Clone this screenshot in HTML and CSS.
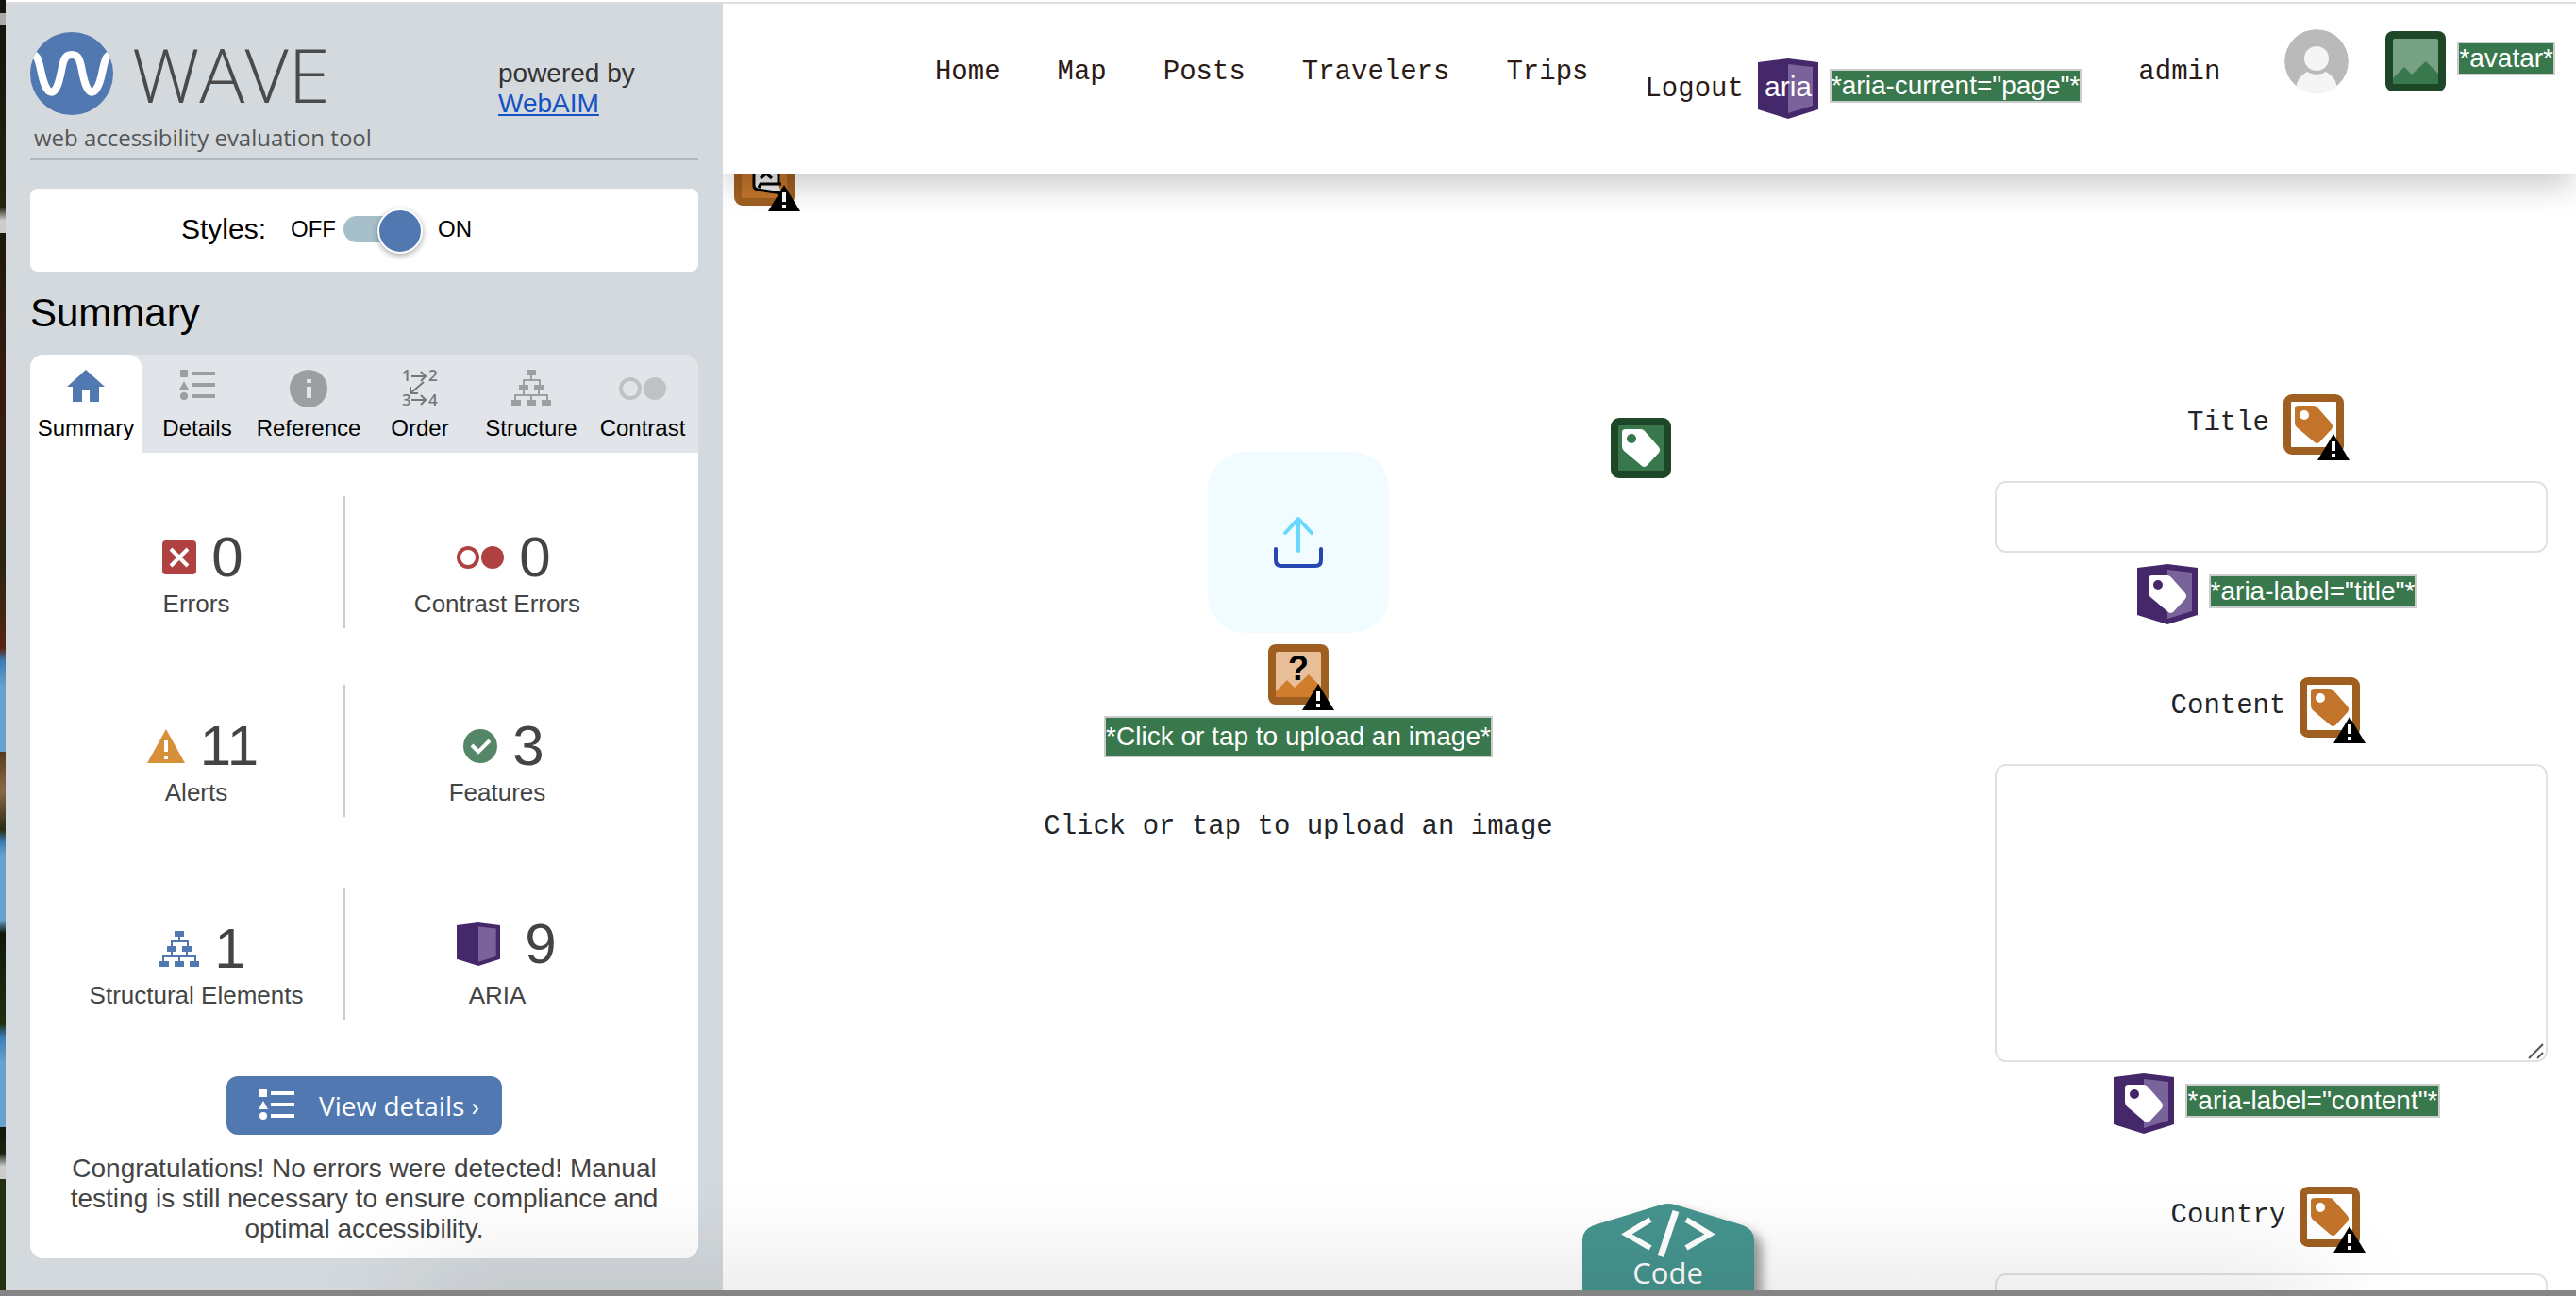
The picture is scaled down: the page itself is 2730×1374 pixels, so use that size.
FILE: index.html
```html
<!DOCTYPE html>
<html lang="en">
<head>
<meta charset="utf-8">
<title>WAVE evaluation</title>
<link rel="stylesheet" href="styles.css">
</head>
<body>
<svg class="defs" width="0" height="0" aria-hidden="true">
  <symbol id="tag" viewBox="0 0 64 64"><path fill-rule="evenodd" d="M12 15q0-3 4-3h16q2 0 4 2l15 17q2 3 0 6L38 51q-3 2-5 0L14 35q-2-2-2-5zM22 17a5 5 0 1 0 0 10a5 5 0 1 0 0-10z"/></symbol>
  <symbol id="alert" viewBox="0 0 34 28"><path d="M17 0L34 28H0z" fill="#000"/><path d="M15 8h4v10h-4zM15 21h4v4h-4z" fill="#fff"/></symbol>
  <symbol id="aria" viewBox="0 0 64 64"><path d="M0 4L32 0L64 4V54L32 64L0 54z" fill="#44286a"/><path d="M32 6L58 9V50L32 58z" fill="#7a629a"/></symbol>
  <symbol id="label-alert" viewBox="0 0 72 72"><rect x="4" y="4" width="56" height="56" rx="5" fill="#fff" stroke="#9f5f20" stroke-width="8"/><use href="#tag" width="64" height="64" fill="#c3742b"/><use href="#alert" x="36" y="42" width="34" height="28"/></symbol>
  <symbol id="tree" viewBox="0 0 42 38"><path d="M16 0h10v6h-4v4h9v6h3v6h-4v4h9v6h3v6H32v-6h5v-4H22v4h4v6H16v-6h4v-4H5v4h5v6H0v-6h3v-6h9v-4H8v-6h4v-6h8V6h-4zM14 12v4h4v6h-4v4h14v-4h-4v-6h5v-4z" fill-rule="evenodd"/></symbol>
  <symbol id="list" viewBox="0 0 38 34"><path d="M1 0h8v8H1zM5 12l5 9H0z"/><circle cx="5" cy="28" r="4"/><path d="M13 2h25v4H13zM13 14h25v4H13zM13 26h25v4H13z"/></symbol>
</svg>
<div class="app">
  <div class="desktop"></div>
  <aside class="sidebar">
    <header class="brand">
      <div>
        <div class="brand-name">
          <svg width="88" height="88" viewBox="0 0 88 88"><defs><clipPath id="disc"><circle cx="44" cy="44" r="44"/></clipPath></defs><circle cx="44" cy="44" r="44" fill="#5178b1"/><path clip-path="url(#disc)" d="M-2 26C8 20 9 31 12 44C17 68 26 70 31 50C35 35 34 24 44 24C54 24 53 35 57 50C62 70 71 68 76 44C79 31 80 20 90 26" fill="none" stroke="#fff" stroke-width="8"/></svg>
          <span>WAVE</span>
        </div>
        <p class="tagline">web accessibility evaluation tool</p>
      </div>
      <p class="powered">powered by<br><a href="#webaim">WebAIM</a></p>
    </header>
    <div class="styles-card">
      <span class="styles-title">Styles:</span>
      <label class="toggle">OFF <input type="checkbox" role="switch" checked> ON</label>
    </div>
    <h1>Summary</h1>
    <nav class="tabs">
      <button class="tab active" type="button"><svg width="40" height="40" viewBox="0 0 40 40"><path d="M20 0L40 18H34V34H24V22H16V34H6V18H0z" fill="#5178b1"/></svg>Summary</button>
      <button class="tab" type="button"><svg width="38" height="40" viewBox="0 0 38 40"><use href="#list" width="38" height="34" fill="#9d9ea1"/></svg>Details</button>
      <button class="tab" type="button"><svg width="40" height="40" viewBox="0 0 40 40"><circle cx="20" cy="20" r="20" fill="#9d9ea1"/><path d="M18 10h5v4h-5zM18 18h5v12h-5z" fill="#e1e4e9"/></svg>Reference</button>
      <button class="tab" type="button"><svg class="order" width="38" height="40" viewBox="0 0 38 40"><text x="0" y="12">1</text><text x="28" y="12">2</text><text x="0" y="38">3</text><text x="28" y="38">4</text><path d="M10 7H25M20 2l5 5l-5 5M10 32H25M20 27l5 5l-5 5M23 13L9 25M9 18v7h8"/></svg>Order</button>
      <button class="tab" type="button"><svg width="42" height="40" viewBox="0 0 42 40"><use href="#tree" width="42" height="38" fill="#9d9ea1"/></svg>Structure</button>
      <button class="tab" type="button"><svg width="50" height="40" viewBox="0 0 50 40"><circle cx="12" cy="20" r="10" fill="none" stroke="#c0c1c4" stroke-width="4"/><circle cx="38" cy="20" r="12" fill="#c0c1c4"/></svg>Contrast</button>
    </nav>
    <section class="panel">
      <div class="counts">
        <div class="count"><div class="num"><svg width="36" height="36" viewBox="0 0 36 36"><rect width="36" height="36" rx="4" fill="#af4140"/><path d="M9 9L27 27M27 9L9 27" stroke="#fff" stroke-width="4"/></svg>0</div>Errors</div>
        <div class="count"><div class="num"><svg width="50" height="36" viewBox="0 0 50 36"><circle cx="12" cy="18" r="10" fill="none" stroke="#af4140" stroke-width="4"/><circle cx="38" cy="18" r="12" fill="#af4140"/></svg>0</div>Contrast Errors</div>
        <div class="count"><div class="num"><svg width="40" height="36" viewBox="0 0 40 36"><path d="M20 0L40 36H0z" fill="#d89038"/><path d="M18 12h4v12h-4zM18 28h4v4h-4z" fill="#fff"/></svg>11</div>Alerts</div>
        <div class="count"><div class="num"><svg width="36" height="36" viewBox="0 0 36 36"><circle cx="18" cy="18" r="18" fill="#568668"/><path d="M9 17L16 24L28 12" fill="none" stroke="#fff" stroke-width="4"/></svg>3</div>Features</div>
        <div class="count"><div class="num"><svg width="42" height="38"><use href="#tree" width="42" height="38" fill="#5178b1"/></svg>1</div>Structural Elements</div>
        <div class="count"><div class="num aria-num"><svg width="46" height="46"><use href="#aria" width="46" height="46"/></svg>9</div>ARIA</div>
      </div>
      <button class="details" type="button"><svg width="38" height="34"><use href="#list" width="38" height="34" fill="#fff"/></svg>View details ›</button>
      <p class="congrats">Congratulations! No errors were detected! Manual testing is still necessary to ensure compliance and optimal accessibility.</p>
    </section>
  </aside>

  <main class="page">
    <header class="topbar">
      <nav class="links">
        <a href="#home">Home</a><a href="#map">Map</a><a href="#posts">Posts</a><a href="#travelers">Travelers</a><a href="#trips">Trips</a>
        <span class="logout"><a href="#logout" aria-current="page">Logout</a><svg width="64" height="64" viewBox="0 0 64 64"><use href="#aria" width="64" height="64"/><text x="32" y="40" class="aria-word">aria</text></svg><span class="note">*aria-current="page"*</span></span>
        <a href="#admin">admin</a>
      </nav>
      <div class="user">
        <svg width="68" height="68" viewBox="0 0 68 68"><defs><clipPath id="head"><circle cx="34" cy="34" r="34"/></clipPath></defs><g clip-path="url(#head)"><circle cx="34" cy="34" r="34" fill="#bababa"/><circle cx="34" cy="31" r="13" fill="#f5f5f5"/><path d="M12 68Q11 52 24 45Q34 51 44 45Q57 52 56 68z" fill="#f5f5f5"/></g></svg>
        <svg width="64" height="64" viewBox="0 0 64 64"><rect width="64" height="64" rx="8" fill="#1e4728"/><rect x="8" y="8" width="48" height="48" rx="2" fill="#76a184"/><path d="M8 50L20 38L28 46L43 32L56 45V54Q56 56 54 56H10Q8 56 8 54z" fill="#39774c"/></svg>
        <span class="note">*avatar*</span>
      </div>
    </header>
    <div class="workspace">
      <svg class="noscript-alert" width="72" height="72" viewBox="0 0 72 72"><rect x="4" y="4" width="56" height="56" rx="5" fill="#c3742b" stroke="#9f5f20" stroke-width="8"/><path d="M21 8H47V42L50 50L24 47Q21 46 21 43z" fill="#eee"/><path d="M21 8V43Q21 46 25 47L50 51M47 8V42M26 45L28 41H50" fill="none" stroke="#000" stroke-width="3"/><path d="M28 35L34 30L40 35" fill="none" stroke="#000" stroke-width="3"/><use href="#alert" x="36" y="42" width="34" height="28"/></svg>
      <section class="upload">
        <svg class="tag-mark" width="64" height="64" viewBox="0 0 64 64"><rect x="4" y="4" width="56" height="56" rx="5" fill="#39774c" stroke="#1e4728" stroke-width="8"/><use href="#tag" width="64" height="64" fill="#fff"/></svg>
        <button class="drop" type="button" aria-label="Upload"><svg width="52" height="54" viewBox="0 0 52 54" fill="none" stroke-width="4" stroke-linecap="round" stroke-linejoin="round"><path d="M26 36V3M12 17L26 2L40 17" stroke="#68d8fc"/><path d="M2 34V46Q2 52 8 52H44Q50 52 50 46V34" stroke="#2746af"/></svg></button>
        <svg class="alt-mark" width="72" height="72" viewBox="0 0 72 72"><rect width="64" height="64" rx="8" fill="#9f5f20"/><rect x="8" y="8" width="48" height="48" rx="2" fill="#e8bf99"/><path d="M8 50L20 38L28 46L43 32L56 45V54Q56 56 54 56H10Q8 56 8 54z" fill="#d07e2d"/><text x="32" y="38" class="query">?</text><use href="#alert" x="36" y="42" width="34" height="28"/></svg>
        <span class="note tall">*Click or tap to upload an image*</span>
        <p>Click or tap to upload an image</p>
      </section>
      <form class="fields">
        <div class="label-row"><label for="title">Title</label><svg width="72" height="72"><use href="#label-alert" width="72" height="72"/></svg></div>
        <input id="title" type="text">
        <div class="aria-row"><svg width="64" height="64"><use href="#aria" width="64" height="64"/><use href="#tag" width="64" height="64" fill="#fff"/></svg><span class="note">*aria-label="title"*</span></div>
        <div class="label-row"><label for="content">Content</label><svg width="72" height="72"><use href="#label-alert" width="72" height="72"/></svg></div>
        <div class="area"><textarea id="content"></textarea><svg class="grip" width="18" height="18" viewBox="0 0 18 18"><path d="M1 17L16 2M10 17L16 11" stroke="#555" stroke-width="2"/></svg></div>
        <div class="aria-row"><svg width="64" height="64"><use href="#aria" width="64" height="64"/><use href="#tag" width="64" height="64" fill="#fff"/></svg><span class="note">*aria-label="content"*</span></div>
        <div class="label-row"><label for="country">Country</label><svg width="72" height="72"><use href="#label-alert" width="72" height="72"/></svg></div>
        <input id="country" type="text">
      </form>
    </div>
    <button class="code" type="button">
      <svg class="code-shape" width="200" height="110" viewBox="0 0 200 110"><path d="M0 110V38Q0 28 12 23L84 1Q91-1 98 1L170 23Q182 28 182 38V110z" fill="#46948e"/></svg>
      <svg width="96" height="48" viewBox="0 0 96 48" fill="none" stroke="#fff"><path d="M29 9L4 24.500L29 39M67 9L92 24.500L67 39" stroke-width="6"/><path d="M56 0L40 48" stroke-width="7"/></svg>
      <span>Code</span>
    </button>
  </main>
  <div class="window-shadow"></div>
</div>
</body>
</html>
```
FILE: styles.css
```css
* { box-sizing: border-box; }
body { margin: 0; font-family: "Liberation Sans", Arial, sans-serif; background: #fff; }
p, h1 { margin: 0; }
button { border: 0; padding: 0; font: inherit; }
svg { flex: none; overflow: visible; }
.defs { position: absolute; }

.app {
  position: relative;
  display: grid;
  grid-template-columns: 6px 760px 1fr;
  height: 100vh;
  overflow: hidden;
  padding-top: 4px;
  border-bottom: 6px solid #858585;
  background: linear-gradient(#fff 2px, #dfdfdf 2px, #dfdfdf 4px, #fff 4px);
}
.desktop {
  margin: -4px 0 -6px;
  background: linear-gradient(
    #14150b 0 1%, #aaa 1% 2%, #14150b 2%, #24240e 16%, #ccc 17% 18%, #1c1a0c 18%,
    #3a1a10 30%, #2c2610 44%, #5a2414 50%, #3d7eb4 51%, #66a2cc 53% 58%,
    #5a3a20 58%, #8a6a45 61%, #2c2a14 64%, #3d7eb4 65%, #66a2cc 66% 71%,
    #12180c 72%, #20300f 79%, #3d7eb4 80%, #66a2cc 82% 87%,
    #12180c 87%, #1c240e 89%, #ccc 90% 91%, #24300f 91% 100%);
}

/* Sidebar */
.sidebar { background: #d4d9dd; padding: 30px 26px 0; color: #444; }
.brand { display: flex; height: 136px; border-bottom: 2px solid #b3b8bc; }
.brand > div { width: 496px; }
.brand-name {
  display: flex; align-items: center; gap: 20px; height: 88px;
  font: 300 80px/88px "Open Sans", sans-serif; color: #4a4a4a;
}
.tagline { margin: 8px 0 0 4px; font: 400 24px/32px "Open Sans", sans-serif; color: #555; }
.powered { padding-top: 28px; font-size: 28px; line-height: 32px; color: #333; }
.powered a { color: #1552c4; }
.styles-card {
  display: flex; align-items: center; gap: 26px;
  height: 88px; margin-top: 30px; padding: 0 0 2px 160px;
  border-radius: 8px; background: #fff; color: #000;
}
.styles-title { font-size: 30px; }
.toggle { display: flex; align-items: center; font-size: 24px; }
.toggle input {
  appearance: none; position: relative; width: 78px; height: 28px;
  margin: 0 22px 0 8px; border-radius: 14px; background: #a6bfca;
}
.toggle input::after {
  content: ""; position: absolute; right: -6px; top: -8px; width: 44px; height: 44px;
  border: 2px solid #fff; border-radius: 50%; background: #5178b1;
  box-shadow: 0 2px 6px rgba(0,0,0,.35);
}
h1 { margin: 20px 0; font-size: 42px; font-weight: 400; line-height: 48px; color: #000; }
.tabs {
  display: grid; grid-template-columns: repeat(6, 1fr); height: 104px;
  border-radius: 14px 14px 0 0; background: #e1e4e9;
}
.tab {
  display: flex; flex-direction: column; align-items: center; gap: 8px;
  padding-top: 16px; background: none; color: #000;
  font-size: 24px; line-height: 28px; white-space: nowrap;
}
.tab.active { background: #fff; border-radius: 14px 14px 0 0; }
.order text { font: 600 17px "Open Sans", sans-serif; fill: #77787b; }
.order path { fill: none; stroke: #77787b; stroke-width: 2; }
.panel {
  display: flex; flex-direction: column; align-items: center;
  height: 854px; border-radius: 0 0 14px 14px; background: #fff;
}
.counts {
  display: grid; grid-template-columns: 314fr 322fr; row-gap: 60px;
  width: 100%; padding: 46px 52px 60px 20px;
}
.count {
  display: flex; flex-direction: column; align-items: center;
  height: 140px; padding-top: 30px;
  font-size: 26px; line-height: 32px;
}
.count:nth-child(odd) { border-right: 2px solid #ccc; }
.count:nth-child(n+5) { margin-top: 15px; }
.num {
  display: flex; align-items: center; gap: 16px;
  height: 68px; padding: 2px 0 0 14px;
  font-size: 60px; line-height: 68px;
}
.aria-num { gap: 26px; padding: 0 0 8px 20px; }
.details {
  display: flex; align-items: center; gap: 26px;
  height: 62px; width: 292px; padding-left: 34px;
  border-radius: 12px; background: #5178b1; color: #fff;
  font: 400 28px/38px "Open Sans", sans-serif; white-space: nowrap;
}
.congrats { margin: 20px 30px 0; text-align: center; font-size: 28px; line-height: 32px; }

/* Evaluated page */
.page {
  position: relative; display: flex; flex-direction: column; min-width: 0;
  overflow: hidden;
  font-family: "Liberation Mono", monospace; font-size: 29px; line-height: 40px; color: #212529;
}
.topbar {
  position: relative; z-index: 1; flex: none;
  display: flex; justify-content: flex-end; align-items: flex-start; gap: 68px;
  height: 180px; padding: 27px 22px 0 0; background: #fff;
  box-shadow: 0 16px 32px -4px rgba(0,0,0,.22);
}
.links { display: flex; align-items: flex-start; gap: 60px; padding-top: 26px; }
.links a { color: #2b1a16; text-decoration: none; }
.logout { display: flex; align-items: flex-start; margin-top: 5px; height: 64px; }
.logout a { margin-top: 13px; }
.logout svg { margin: 0 12px 0 15px; }
.logout .note { margin-top: 11px; }
.aria-word { font: 30px "Liberation Sans", sans-serif; fill: #fff; text-anchor: middle; }
.note {
  border: 2px solid #ccc; background: #39774c; color: #fff;
  font: 28px/32px "Liberation Sans", Arial, sans-serif; white-space: nowrap;
}
.note.tall { line-height: 40px; }
.user { display: flex; align-items: flex-start; }
.user svg + svg { margin: 2px 12px 0 39px; }
.user .note { margin-top: 13px; }
.workspace { position: relative; display: grid; grid-template-columns: 1220fr 744fr; }
.noscript-alert { position: absolute; left: 12px; top: -30px; }
.upload {
  position: relative; display: flex; flex-direction: column; align-items: center;
  padding-top: 295px;
}
.tag-mark { position: absolute; right: 215px; top: 259px; }
.drop {
  display: grid; place-items: center; width: 192px; height: 192px;
  border-radius: 40px; background: #f0fcff;
}
.alt-mark { margin: 12px -8px 4px 0; }
.query { font: 700 36px "Liberation Sans", sans-serif; text-anchor: middle; }
.upload p { margin-top: 54px; }
.fields { padding: 234px 30px 0 128px; }
.label-row { display: flex; justify-content: center; height: 92px; }
.label-row label { margin: 11px 15px 0 0; }
.label-row svg { margin-right: 4px; }
.fields input, .fields textarea {
  display: block; width: 100%; height: 76px; margin: 0; padding: 12px 24px;
  border: 2px solid #dee2e6; border-radius: 12px; background: #fff; font: inherit;
}
.fields textarea { height: 316px; resize: none; }
.area { position: relative; }
.grip { position: absolute; right: 3px; bottom: 3px; }
.aria-row { display: flex; justify-content: center; height: 120px; margin: 12px 0 0 12px; }
.aria-row .note { margin: 11px 0 0 12px; height: 36px; }
.code {
  position: absolute; left: 51%; bottom: 0; width: 182px; height: 92px; margin-left: -91px;
  display: flex; flex-direction: column; align-items: center; justify-content: flex-start; padding-top: 8px;
  background: none; color: #fff;
  font: 400 31px/34px "Open Sans", sans-serif;
}
.code svg, .code span { position: relative; }
.code .code-shape { position: absolute; left: 0; top: 0; filter: drop-shadow(8px 8px 6px rgba(0,0,0,.4)); }
.window-shadow {
  position: absolute; left: 16%; right: 10%; bottom: -60px; height: 60px;
  box-shadow: 0 0 120px rgba(0,0,0,.18); pointer-events: none;
}
```
